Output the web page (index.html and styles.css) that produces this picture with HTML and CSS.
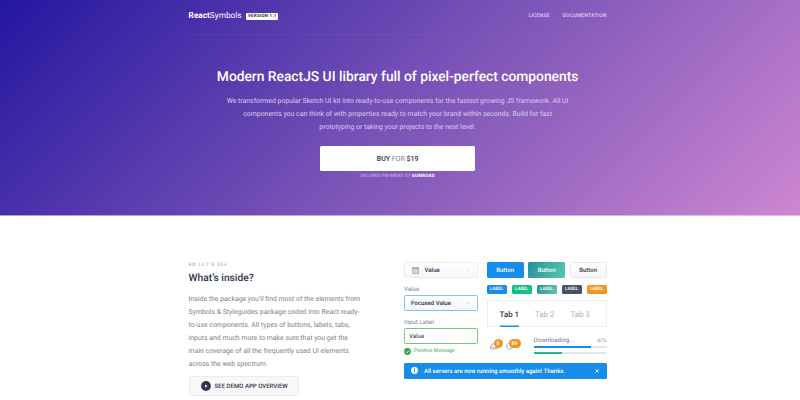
FILE: index.html
```html
<!DOCTYPE html>
<html lang="en">
<head>
<meta charset="utf-8">
<title>ReactSymbols</title>
<link rel="stylesheet" href="styles.css">
</head>
<body>
<header class="hero">
  <div class="container">
    <nav class="nav">
      <div class="brand"><span class="logo"><b>React</b>Symbols</span><span class="version">VERSION 1.1</span></div>
      <div class="links"><a>LICENSE</a><a>DOCUMENTATION</a></div>
    </nav>
    <h1>Modern ReactJS UI library full of pixel-perfect components</h1>
    <p class="lead">We transformed popular Sketch UI kit into ready-to-use components for the fastest growing JS framework. All UI<br>components you can think of with properties ready to match your brand within seconds. Build for fast<br>prototyping or taking your projects to the next level.</p>
    <a class="buy"><span><b>BUY</b> FOR <b>$19</b></span></a>
    <div class="secured">SECURED PAYMENT BY <b>GUMROAD</b></div>
  </div>
</header>
<main class="container inside">
  <section class="about">
    <div class="eyebrow">SO LET’S SEE</div>
    <h2>What’s inside?</h2>
    <p class="copy">Inside the package you’ll find most of the elements from<br>Symbols &amp; Styleguides package coded into React ready-<br>to-use components. All types of buttons, labels, tabs,<br>inputs and much more to make sure that you get the<br>main coverage of all the frequently used UI elements<br>across the web spectrum.</p>
    <a class="demo">
      <svg width="10" height="10" viewBox="0 0 10 10"><circle cx="5" cy="5" r="4.9" fill="#2b3950"/><path d="M4 3.4 6.6 5 4 6.6z" fill="#fff"/></svg>
      <span>SEE DEMO APP OVERVIEW</span>
    </a>
  </section>
  <section class="kit">
    <div class="columns">
      <div class="fields">
        <div class="select">
          <svg class="cal" width="7" height="7" viewBox="0 0 7 7"><path d="M.4.6h6.200v6H.4z" fill="#dfe2e8" stroke="#8f97a4" stroke-width=".7"/><path d="M.5 1.700h6" stroke="#8f97a4" stroke-width="1"/><path d="M1.500 3.500h4M1.500 5h4" stroke="#aab0bb" stroke-width=".7" stroke-dasharray=".8 .8"/></svg>
          <span>Value</span>
          <svg class="chev" width="4" height="3" viewBox="0 0 4 3"><path d="m.7.8 1.3 1 1.3-1" fill="none" stroke="#c8ccd4" stroke-width=".6"/></svg>
        </div>
        <label class="label-a">Value</label>
        <div class="select focused">
          <span>Focused Value</span>
          <svg class="chev" width="4" height="3" viewBox="0 0 4 3"><path d="m.7.8 1.3 1 1.3-1" fill="none" stroke="#c8ccd4" stroke-width=".6"/></svg>
        </div>
        <label class="label-b">Input Label</label>
        <div class="input">Value</div>
        <div class="message">
          <svg width="7" height="7" viewBox="0 0 7 7"><circle cx="3.5" cy="3.5" r="3.4" fill="#2fa84a"/><path d="m2 3.6 1.1 1.1L5.1 2.6" fill="none" stroke="#fff" stroke-width=".9"/></svg>
          <span>Positive Message</span>
        </div>
      </div>
      <div class="widgets">
        <div class="buttons"><span class="btn blue">Button</span><span class="btn teal">Button</span><span class="btn plain">Button</span></div>
        <div class="tags"><span class="blue">LABEL</span><span class="green">LABEL</span><span class="teal">LABEL</span><span class="dark">LABEL</span><span class="orange">LABEL</span></div>
        <div class="tabs"><span class="active">Tab 1</span><span>Tab 2</span><span>Tab 3</span></div>
        <div class="status">
          <div class="icon one">
            <svg width="8" height="8" viewBox="0 0 8 8"><path d="M.6 7V5L2 2h4l1.400 3v2zM.6 5h2l.5 1h1.8l.5-1h2" fill="none" stroke="#8d929b" stroke-width=".7"/></svg>
            <b>8</b>
          </div>
          <div class="icon two">
            <svg width="8" height="8" viewBox="0 0 8 8"><path d="M4 1C1.5 1 .6 2.4.6 4c0 1.500.9 2.500 2 2.800L4 7.700l.5-1C6.300 6.500 7.400 5.500 7.400 4S6.500 1 4 1z" fill="none" stroke="#8d929b" stroke-width=".7"/></svg>
            <b>89</b>
          </div>
          <div class="progress">
            <div class="caption"><span>Downloading...</span><small>82%</small></div>
            <div class="track"><i class="p-blue"></i></div>
            <div class="track second"><i class="p-green"></i></div>
          </div>
        </div>
      </div>
    </div>
    <div class="alert">
      <svg width="7" height="7" viewBox="0 0 7 7"><circle cx="3.5" cy="3.5" r="3.4" fill="#fff"/><path d="M3.500 1.300v1M3.500 2.900v2.500" stroke="#178de9" stroke-width="1"/></svg>
      <span>All servers are now running smoothly again! Thanks.</span>
      <svg class="close" width="4" height="4" viewBox="0 0 4 4"><path d="m.4.4 3.200 3.200M3.600.4.4 3.600" stroke="#fff" stroke-width=".9"/></svg>
    </div>
  </section>
</main>
</body>
</html>
```
FILE: styles.css
```css
* { box-sizing: border-box; }
body { margin: 0; height: 400px; overflow: hidden; background: #fff; font-family: Roboto, sans-serif; color: #2b3447; text-rendering: geometricPrecision; }
svg { display: block; flex: none; }
b { font-weight: 700; }
.container { width: 418px; margin-left: 188.600px; }

.hero { height: 216px; background: linear-gradient(135deg, #2416a0 0%, #7550b6 48%, #cd87d2 100%); color: #fff; overflow: hidden; border-bottom: 1px solid; border-image: linear-gradient(90deg, #a9a0d8, #e4c0e8) 1; }
.nav { height: 35px; padding-bottom: 2px; display: flex; justify-content: space-between; align-items: center; border-bottom: 1px solid rgba(255,255,255,.04); }
.brand { display: flex; align-items: center; gap: 4.500px; }
.logo { font-size: 8.250px; line-height: 10px; }
.version { height: 7px; width: 32.500px; border-radius: 1px; background: #fff; color: #2b3447; font-size: 4.500px; line-height: 8px; font-weight: 700; text-align: center; letter-spacing: .2px; }
.links { display: flex; gap: 13px; font-size: 5.200px; font-weight: 500; color: #ddd0f0; letter-spacing: .1px; }
h1 { margin: 32px 0 0; height: 20px; line-height: 20px; font-size: 13.800px; font-weight: 500; text-align: center; white-space: nowrap; }
.lead { margin: 7.500px -10px 0; font-size: 6.900px; line-height: 13px; text-align: center; color: #d9cdee; white-space: nowrap; }
.buy { width: 155px; height: 24.500px; margin: 12.500px auto 0; padding-top: 1px; display: flex; align-items: center; justify-content: center; background: #fff; border-radius: 1.500px; color: #7b8290; font-size: 7px; }
.buy b { color: #2b3447; font-weight: 500; }
.secured { margin-top: 2.500px; line-height: 7px; font-size: 4.450px; text-align: center; color: #d4c0e9; letter-spacing: .2px; }
.secured b { color: #fff; }

.inside { padding-top: 46px; display: flex; justify-content: space-between; }
.about { width: 190px; white-space: nowrap; }
.eyebrow { font-size: 4.600px; line-height: 8px; letter-spacing: 1px; color: #8d929d; }
h2 { margin: 2px 0 0; font-size: 10.200px; line-height: 14px; font-weight: 500; color: #2b3447; }
.copy { margin: 7px 0 0; font-size: 6.900px; line-height: 13px; color: #7d828e; }
.demo { margin-top: 5px; width: 110px; height: 20px; padding-left: 11px; display: flex; align-items: center; gap: 4px; border: 1px solid #ececef; background: #f8f8f9; border-radius: 1px; font-size: 6.050px; font-weight: 500; }

.kit { width: 202.600px; }
.columns { display: flex; justify-content: space-between; height: 101px; }
.fields { width: 74px; }
.select { height: 16px; padding: 1px 7px 0; display: flex; align-items: center; border: 1px solid #e9ebef; border-radius: 1.500px; background: linear-gradient(#fff, #f5f6fa); font-size: 6.100px; font-weight: 500; }
.cal { margin-right: 5.500px; }
.chev { margin-left: auto; }
.focused { border-color: #82c1f3; padding-left: 6px; }
.fields label { display: block; color: #7d8899; font-size: 6.100px; line-height: 8px; }
.label-a { margin: 8px 0 1px; }
.label-b { margin: 7.500px 0 1.500px; }
.input { height: 16px; padding-left: 4px; border: 1px solid #72c67b; border-radius: 1.500px; font-size: 6.100px; line-height: 15.500px; }
.message { margin-top: 4px; display: flex; align-items: center; gap: 3px; font-size: 5.200px; line-height: 7px; color: #45ae50; }

.widgets { width: 120px; }
.buttons { display: flex; justify-content: space-between; }
.btn { width: 37px; height: 16px; border-radius: 1.500px; text-align: center; line-height: 17.500px; font-size: 6px; font-weight: 500; color: #fff; }
.blue { background: #178de9; }
.teal { background: linear-gradient(120deg, #258f98, #5cc7b3); }
.green { background: #17bd8b; }
.dark { background: #465066; }
.orange { background: #f39621; }
.btn.plain { color: #2b3447; background: linear-gradient(#fff, #f5f6fa); border: 1px solid #e6e8ed; line-height: 15.500px; }
.tags { margin-top: 7px; display: flex; justify-content: space-between; }
.tags span { width: 20px; height: 9px; border-radius: 1.500px; color: #fff; font-size: 4.500px; line-height: 10px; font-weight: 500; text-align: center; }
.tabs { height: 27px; margin-top: 6px; padding: 0 12px; display: flex; gap: 16px; border: 1px solid #edeef1; font-size: 7.900px; line-height: 27px; color: #adb0b6; }
.tabs .active { color: #2b3447; font-weight: 500; box-shadow: inset 0 -.5px #178de9, 0 1px #178de9; }
.status { display: flex; padding-top: 9px; }
.icon { position: relative; width: 16px; height: 16px; }
.icon svg { margin: 6px 0 0 3.500px; }
.icon b { position: absolute; left: 7px; top: 3px; height: 9px; min-width: 9px; padding: 0 2px; border-radius: 5px; background: #f39621; color: #fff; font-size: 5.200px; line-height: 10px; text-align: center; }
.icon.two b { left: 6px; width: 12px; }
.progress { width: 73px; margin-left: auto; }
.caption { display: flex; justify-content: space-between; font-size: 6.150px; line-height: 9px; height: 8px; color: #6f7b8f; }
.caption small { font-size: 5px; line-height: 10px; color: #8c919a; }
.track { height: 2px; margin-top: 2px; background: #e2e7ee; }
.track.second { margin-top: 4px; }
.track i { display: block; height: 2px; }
.p-blue { width: 78%; background: #178de9; }
.p-green { width: 39%; background: #23b78d; }
.alert { height: 15.500px; display: flex; align-items: center; gap: 6px; padding: 0 8px 0 7px; border-radius: 1.500px; background: #178de9; color: #fff; font-size: 6.050px; font-weight: 500; }
.alert span { padding-top: 1px; }
.close { margin-left: auto; }
```
